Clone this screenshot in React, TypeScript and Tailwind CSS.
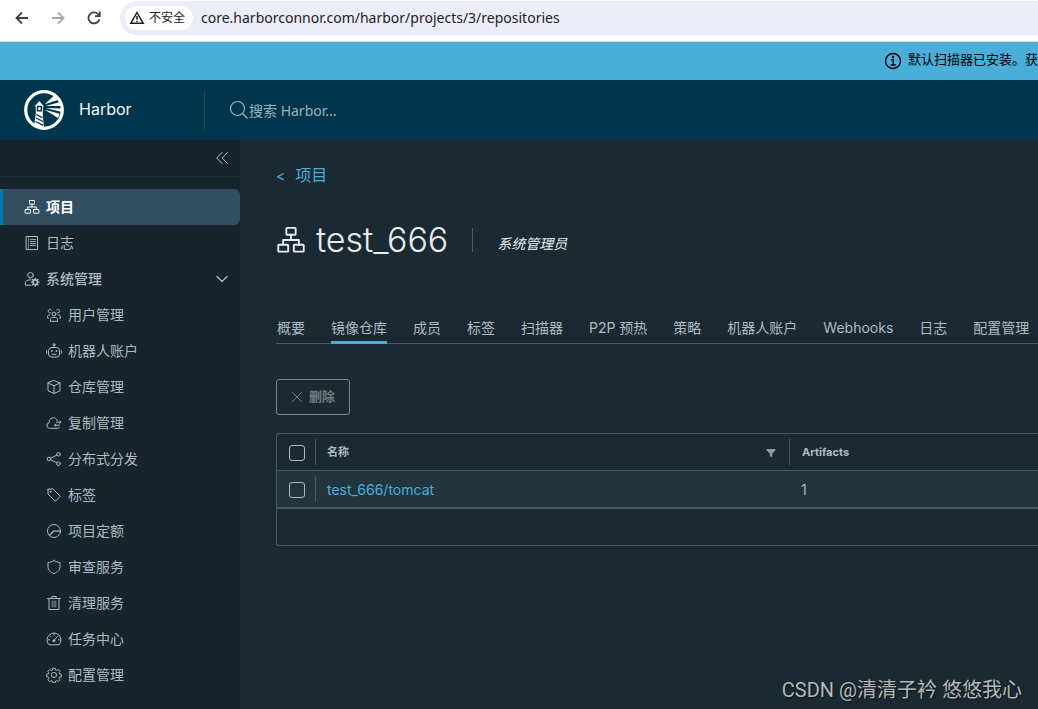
import type { ReactNode } from "react"

const Icon = ({ children, size = "sm" }: { children: ReactNode, size?: "sm" | "lg" }) => {
    return (
        <svg
            viewBox="0 0 16 16"
            fill="none"
            stroke="currentColor"
            strokeLinecap="round"
            strokeLinejoin="round"
            aria-hidden="true"
            className={size === "lg" ? "size-[30px] shrink-0 stroke-1" : "size-4 shrink-0 stroke-1"}
        >
            {children}
        </svg>
    )
}

const OrgShapes = () => (
    <>
        <rect x="5.5" y="1.5" width="5" height="3.7" rx="0.4" />
        <rect x="1.2" y="10.5" width="5.3" height="3.7" rx="0.4" />
        <rect x="9.5" y="10.5" width="5.3" height="3.7" rx="0.4" />
        <path d="M8 5.2v2.600M3.800 10.500V8h8.400v2.500" />
    </>
)

const LogShapes = () => (
    <>
        <rect x="2.5" y="1.5" width="11" height="13" />
        <path d="M4.5 2v12" strokeWidth="0.6" />
        <path d="M6.5 4.5h5M6.5 6.5h5M6.5 8.5h5M6.5 10.5h5" strokeWidth="0.9" />
    </>
)

const AdminShapes = () => (
    <>
        <circle cx="6.5" cy="4.2" r="2.8" />
        <path d="M7 14.2H1.3v-2.4c0-1.6 2-2.9 4.7-2.9h1" />
        <circle cx="11.3" cy="11.2" r="2.3" strokeWidth="1.6" />
        <path d="M11.3 7.4v1M11.3 14v1M7.5 11.2h1M14.1 11.2h1M8.6 8.5l.8.8M13.2 13.1l.8.8M14 8.5l-.8.8M9.4 13.1l-.8.8" strokeWidth="1.3" />
    </>
)

const UsersShapes = () => (
    <>
        <circle cx="8" cy="7" r="1.9" />
        <path d="M4.500 14v-1.700c0-1.100 1.500-2 3.500-2s3.500.9 3.500 2V14z" />
        <path d="M5.600 3.200A1.800 1.800 0 1 0 4.500 5.800M10.400 3.200a1.800 1.800 0 1 1 1.100 2.600M3.800 7.800c-1.400.1-2.300.8-2.300 1.600v1.600h1.200M12.200 7.800c1.400.1 2.300.8 2.300 1.600v1.600h-1.200" />
    </>
)

const RobotShapes = () => (
    <>
        <rect x="2.5" y="4.5" width="11" height="9.5" rx="3" />
        <path d="M8 4.5V2.8M.7 7.5v3M15.3 7.5v3M6 11.3h4" />
        <circle cx="8" cy="1.7" r="1" />
        <circle cx="5.7" cy="8" r="0.5" />
        <circle cx="10.3" cy="8" r="0.5" />
    </>
)

const CubeShapes = () => (
    <path d="M8 1.5 14 4v7.800L8 14.500 2 11.800V4zM2 4l6 2.800L14 4M8 6.800v7.700" />
)

const CloudShapes = () => (
    <>
        <path d="M13.5 12.2c-.5.7-1.3 1.100-2.200 1.100H3.600a2.900 2.900 0 0 1-.4-5.700 4.200 4.200 0 0 1 8.200-1.700" />
        <path d="M10.500 7.200h4.500M13.800 6 15 7.200l-1.200 1.200M13.500 10.200H8.500M9.700 9l-1.200 1.200 1.200 1.200" />
    </>
)

const ShareShapes = () => (
    <>
        <circle cx="3" cy="8" r="1.8" />
        <circle cx="12.5" cy="3.3" r="1.8" />
        <circle cx="12.5" cy="12.7" r="1.8" />
        <path d="m4.700 7.200 6.100-3M4.700 8.800l6.100 3" />
    </>
)

const TagShapes = () => (
    <>
        <path d="M2 2.800V7l7.300 7.300 5-5L7 2H2.800a.8.8 0 0 0-.8.800z" />
        <circle cx="4.7" cy="4.7" r="0.5" />
    </>
)

const QuotaShapes = () => (
    <>
        <circle cx="8" cy="8" r="6.500" />
        <path d="M3.500 12.300 7.600 8.200H14" strokeWidth="1.300" />
    </>
)

const ShieldShapes = () => (
    <path d="M8 1.500c1.800 1.300 3.800 1.900 6 2v4.200c0 3.300-2.300 5.500-6 6.900-3.700-1.400-6-3.600-6-6.900V3.500c2.200-.1 4.200-.7 6-2z" />
)

const TrashShapes = () => (
    <>
        <path d="M1.500 3.500h13M3 3.500v11h10v-11M5.800 3.500v-2h4.400v2" />
        <path d="M6.200 6v6M8 6v6M9.800 6v6" strokeWidth="0.7" />
    </>
)

const GaugeShapes = () => (
    <>
        <path d="M2.600 13.500a7 7 0 1 1 10.800 0z" />
        <path d="m8 9.500 3.300-3.800M8 3v1.200M2.500 8.800h1.200M12.300 8.800h1.200M4.300 5.200l.7.700" />
        <circle cx="7.8" cy="9.8" r="1" fill="currentColor" />
    </>
)

const CogShapes = () => (
    <>
        <circle cx="8" cy="8" r="2.6" />
        <path d="m6.700 1.300 2.600 0 .4 1.800 1 .4 1.600-1 1.800 1.800-1 1.600.4 1 1.800.4v2.500l-1.800.4-.4 1 1 1.600-1.800 1.800-1.600-1-1 .4-.4 1.700H6.700l-.4-1.700-1-.4-1.600 1-1.800-1.800 1-1.600-.4-1-1.800-.4V7.300l1.800-.4.4-1-1-1.600 1.800-1.800 1.600 1 1-.4z" />
    </>
)

const adminItems = [
    { label: "用户管理", icon: <UsersShapes /> },
    { label: "机器人账户", icon: <RobotShapes /> },
    { label: "仓库管理", icon: <CubeShapes /> },
    { label: "复制管理", icon: <CloudShapes /> },
    { label: "分布式分发", icon: <ShareShapes /> },
    { label: "标签", icon: <TagShapes /> },
    { label: "项目定额", icon: <QuotaShapes /> },
    { label: "审查服务", icon: <ShieldShapes /> },
    { label: "清理服务", icon: <TrashShapes /> },
    { label: "任务中心", icon: <GaugeShapes /> },
    { label: "配置管理", icon: <CogShapes /> },
]

const tabs = ["概要", "镜像仓库", "成员", "标签", "扫描器", "P2P 预热", "策略", "机器人账户", "Webhooks", "日志", "配置管理"]

const BrowserBar = () => {
    return (
        <div className="flex h-[42px] items-start border-b border-[#dcdfe3] bg-white pl-3.5 text-[#3c4043]">
            <div className="flex h-9 items-center gap-5">
                <button aria-label="后退" className="size-4">
                    <svg viewBox="0 0 16 16" fill="none" stroke="currentColor" strokeWidth="1.8"><path d="M14 8H2.5M8 2.5 2.500 8 8 13.500" /></svg>
                </button>
                <button aria-label="前进" className="size-4 text-[#a6a8ab]">
                    <svg viewBox="0 0 16 16" fill="none" stroke="currentColor" strokeWidth="1.8"><path d="M2 8h11.5M8 2.5 13.500 8 8 13.500" /></svg>
                </button>
                <button aria-label="刷新" className="size-4">
                    <svg viewBox="0 0 16 16" fill="none" stroke="currentColor" strokeWidth="1.8"><path d="M13.3 9.2A5.5 5.5 0 1 1 12 4.200l1.500 1.500" /><path d="M13.700 1.500v4.700H9" /></svg>
                </button>
            </div>
            <div className="mt-px ml-[18px] flex h-[34px] flex-1 items-center gap-2 rounded-l-full bg-[#ebeef8] pl-[5px]">
                <button className="flex h-6 items-center gap-1 rounded-full bg-white pr-2 pl-1 text-[12px] text-[#202124]">
                    <svg viewBox="0 0 16 16" className="size-4" fill="none" stroke="currentColor" strokeWidth="1.5"><path d="M8 2.5 14.200 13.300H1.800z" /><path d="M8 6v3.800M8 10.800v1.400" /></svg>
                    不安全
                </button>
                <input
                    aria-label="地址"
                    readOnly
                    value="core.harborconnor.com/harbor/projects/3/repositories"
                    className="min-w-0 flex-1 bg-transparent pb-0.5 font-['Noto_Sans',sans-serif] text-[14px] text-[#1f2024] outline-none"
                />
            </div>
        </div>
    )
}

const Header = () => {
    return (
        <header className="flex h-[60px] items-center bg-[#00364d]">
            <a href="#home" className="flex h-10 w-[205px] items-center gap-[15px] border-r border-[#1c4c61] pl-6 text-[16px] text-[#f5f8fa]">
                <svg viewBox="0 0 40 40" className="size-10" aria-hidden="true">
                    <circle cx="20" cy="20" r="18.3" fill="none" stroke="#fff" strokeWidth="3.2" />
                    <path d="M10.500 16.500 15.300 11l4.700 5.500h-1.200V24l1.200 14-9.800-3L11.800 24V16.500z" fill="#fff" />
                    <path d="M13.500 16.500h3.800v4.300h-3.800z" fill="#fff" stroke="#00364d" strokeWidth="1.4" />
                    <path d="m12.300 24.500 6.200 3.200M12 28l7 3.500M11.600 31.500l7.600 3.800" stroke="#00364d" strokeWidth="1.3" />
                    <path d="m20.800 14.300 8.700-8.200 4.200 4zM21.500 16l13.800-3.700 1.500 3.800zM21.500 18l15.500.600v3.200zM20.800 19.800l14.800 4-1.600 4.200z" fill="#fff" />
                </svg>
                <span className="pb-0.5">Harbor</span>
            </a>
            <label className="flex min-w-0 flex-1 items-center pl-6 text-[#9cb1bc]">
                <svg viewBox="0 0 20 20" className="size-5 shrink-0" fill="none" stroke="currentColor" strokeWidth="1.2" aria-hidden="true">
                    <circle cx="8.5" cy="8.5" r="7" />
                    <path d="m13.5 13.5 5 5" />
                </svg>
                <input aria-label="搜索" placeholder="搜索 Harbor..." className="min-w-0 flex-1 bg-transparent font-['Noto_Sans','Noto_Sans_CJK_SC',sans-serif] text-[14px] outline-none placeholder:text-[#9cb1bc]" />
            </label>
        </header>
    )
}

const Sidebar = () => {
    return (
        <nav className="w-60 shrink-0 bg-[#17242b] text-[14px] text-[#adbbc4]">
            <div className="flex h-[37px] items-center justify-end border-b border-[#212f37] pr-2.5">
                <button aria-label="折叠">
                    <Icon><path d="M8 2.5 2.700 8 8 13.500M13.500 2.500 8.200 8l5.300 5.500" /></Icon>
                </button>
            </div>
            <a href="#projects" className="mt-3 flex h-9 items-center gap-1.5 rounded-r-md border-l-3 border-[#0079ad] bg-[#324f61] pl-[21px] font-bold text-white">
                <Icon><OrgShapes /></Icon>
                <span className="pb-0.5">项目</span>
            </a>
            <a href="#logs" className="flex h-9 items-center gap-1.5 pl-6">
                <Icon><LogShapes /></Icon>
                <span className="pb-0.5">日志</span>
            </a>
            <button className="flex h-9 w-full items-center gap-1.5 pr-2.5 pl-6 font-medium">
                <Icon><AdminShapes /></Icon>
                <span className="flex-1 pb-0.5 text-left">系统管理</span>
                <Icon><path d="m3 5.500 5 5 5-5" strokeWidth="1.4" /></Icon>
            </button>
            {adminItems.map((item) => (
                <a key={item.label} href="#admin" className="flex h-9 items-center gap-1.5 pl-[46px]">
                    <Icon>{item.icon}</Icon>
                    <span className="pb-0.5">{item.label}</span>
                </a>
            ))}
        </nav>
    )
}

const CheckBox = ({ label }: { label: string }) => {
    return <input type="checkbox" aria-label={label} className="block size-4 appearance-none rounded-[3px] border border-[#adbbc4]" />
}

const RepositoryTable = () => {
    return (
        <div className="mt-[18px] rounded-l-[3px] border-y border-l border-[#495a64]">
            <table className="w-full table-fixed border-separate border-spacing-0 text-left">
                <thead>
                    <tr className="h-[37px] text-[11px]">
                        <th className="w-[38px] border-b border-[#495a64] pt-0.5 pl-3"><CheckBox label="全选" /></th>
                        <th className="w-[474px] border-b border-[#495a64]">
                            <div className="flex h-[26px] items-center justify-between border-l border-[#495a64] pr-3 pl-[11px]">
                                名称
                                <button aria-label="过滤" className="pt-0.5">
                                    <svg viewBox="0 0 12 12" className="size-3 text-[#989898]" fill="currentColor"><path d="M1.5 2h9v1.300L7.300 6.500v4L4.800 9V6.500L1.500 3.300z" /></svg>
                                </button>
                            </div>
                        </th>
                        <th className="border-b border-[#495a64]">
                            <div className="flex h-[26px] items-center border-l border-[#495a64] pl-3">Artifacts</div>
                        </th>
                    </tr>
                </thead>
                <tbody>
                    <tr className="h-[37px] bg-[#22343c] text-[14px]">
                        <td className="border-b border-[#495a64] pt-0.5 pl-3"><CheckBox label="test_666/tomcat" /></td>
                        <td className="border-b border-[#495a64]">
                            <div className="flex h-[26px] items-center border-l border-[#495a64] pl-[11px]">
                                <a href="#tomcat" className="text-[#4aaed9]">test_666/tomcat</a>
                            </div>
                        </td>
                        <td className="border-b border-[#495a64] pl-3">1</td>
                    </tr>
                </tbody>
            </table>
            <div className="h-[37px] border-t border-[#495a64]" />
        </div>
    )
}

export default function App() {
    return (
        <div className="relative flex min-h-screen flex-col overflow-hidden bg-[#1b2a32] font-['Inter','Noto_Sans_CJK_SC',sans-serif] text-[#adbbc4]">
            <BrowserBar />
            <div className="flex h-[38px] items-center justify-end bg-[#4aaed9] text-[13px] text-black">
                <svg viewBox="0 0 18 18" className="mr-1.5 size-[18px]" fill="none" stroke="currentColor" strokeWidth="1.4" aria-hidden="true">
                    <circle cx="9" cy="9" r="7.5" />
                    <path d="M7.200 7.800h2v5M6.700 13h5" />
                    <circle cx="9" cy="5" r="0.5" fill="currentColor" />
                </svg>
                <span className="pb-0.5">默认扫描器已安装。获</span>
            </div>
            <Header />
            <div className="flex flex-1">
                <Sidebar />
                <main className="min-w-0 flex-1 pt-[23px] pl-9">
                    <a href="#projects" className="flex h-6 items-center gap-2.5 text-[16px] text-[#4aaed9]">
                        <span className="text-[14px]">&lt;</span>
                        项目
                    </a>
                    <div className="mt-[33px] flex h-10 items-center text-[#e9ecef]">
                        <Icon size="lg"><OrgShapes /></Icon>
                        <h1 className="ml-2.5 text-[34px] leading-10 font-light">test_666</h1>
                        <span className="ml-6 h-6 border-l border-[#495a64]" />
                        <em className="ml-6 pt-1.5 text-[14px]">系统管理员</em>
                    </div>
                    <div role="tablist" className="mt-[53px] flex h-[31px] gap-[26px] border-b border-[#495a64] pl-px text-[14px] whitespace-nowrap">
                        {tabs.map((tab) => (
                            <button
                                key={tab}
                                role="tab"
                                aria-selected={tab === "镜像仓库"}
                                className={tab === "镜像仓库" ? "-mb-px shrink-0 border-b-3 border-[#4aaed9]" : "shrink-0 pb-0.5"}
                            >
                                {tab}
                            </button>
                        ))}
                    </div>
                    <button disabled className="mt-[35px] flex h-9 items-center gap-1 rounded-[3px] border border-[#7c878d] pr-3.5 pl-3 text-[13px] font-bold text-[#6f7b81]">
                        <Icon><path d="m3.500 3.500 9 9M12.500 3.500l-9 9" /></Icon>
                        删除
                    </button>
                    <RepositoryTable />
                </main>
            </div>
            <div className="absolute right-4 bottom-1 font-['Roboto','Noto_Sans_CJK_SC',sans-serif] text-[20px] text-[#b4b8ba] [text-shadow:1px_1px_1px_#0b1114]">
                CSDN @清清子衿 悠悠我心
            </div>
        </div>
    )
}
